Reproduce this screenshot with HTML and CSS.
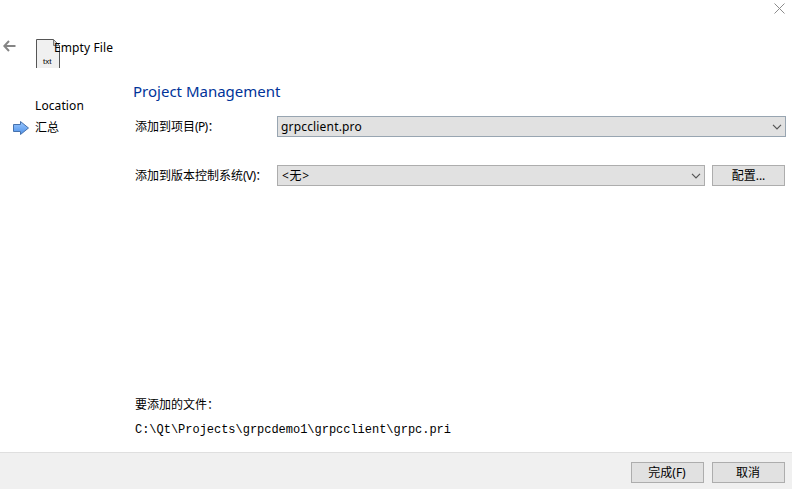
FILE: index.html
```html
<!DOCTYPE html>
<html lang="zh-CN">
<head>
<meta charset="utf-8">
<title>Empty File</title>
<link rel="stylesheet" href="styles.css">
</head>
<body>
<div class="wizard">
  <header class="titlebar">
    <svg class="close" width="11" height="11" viewBox="0 0 11 11"><path d="M.5 .5l10 10M10.500 .5l-10 10"/></svg>
  </header>
  <div class="heading">
    <svg class="back" width="13" height="12" viewBox="0 0 13 12"><path d="M6 1L1.300 6L6 11M1.500 6H12.500"/></svg>
    <div class="file-icon">
      <svg width="26" height="29" viewBox="0 0 26 29"><path class="sheet" d="M1.500 29V.5H18.500L24.500 6.500V29"/><path class="fold" d="M18.500 .5V6.500H24.500Z"/></svg>
      <span class="ext">txt</span>
    </div>
    <span class="name">Empty File</span>
  </div>
  <div class="content">
    <nav class="steps">
      <div class="step"><span class="latin">Location</span></div>
      <div class="step current">
        <svg width="17" height="16" viewBox="0 0 17 16">
          <defs><linearGradient id="blue" x1="0" y1="0" x2="0" y2="1"><stop offset="0" stop-color="#9bc8ff"/><stop offset="1" stop-color="#4e91e8"/></linearGradient></defs>
          <path d="M.5 4.500H7.500V1.500L15.500 8L7.500 14.500V11.500H.5Z" fill="url(#blue)" stroke="#4772ad"/>
        </svg>
        <span>汇总</span>
      </div>
    </nav>
    <main class="page">
      <h1>Project Management</h1>
      <div class="row">
        <label>添加到项目<span class="key">(P)：</span></label>
        <div class="combo focus"><span class="value">grpcclient.pro</span><svg width="10" height="6" viewBox="0 0 10 6"><path d="M1 .8l4 4l4-4"/></svg></div>
      </div>
      <div class="row vcs">
        <label>添加到版本控制系统<span class="key">(V)：</span></label>
        <div class="combo"><span class="none">&lt;无&gt;</span><svg width="10" height="6" viewBox="0 0 10 6"><path d="M1 .8l4 4l4-4"/></svg></div>
        <button>配置...</button>
      </div>
      <section class="files">
        <div class="files-title">要添加的文件<span class="key">：</span></div>
        <div class="path">C:\Qt\Projects\grpcdemo1\grpcclient\grpc.pri</div>
      </section>
    </main>
  </div>
  <footer>
    <button class="finish">完成(F)</button>
    <button>取消</button>
  </footer>
</div>
</body>
</html>
```
FILE: styles.css
```css
* { box-sizing: border-box; }
body { margin: 0; background: #fff; color: #000; font: 12px/18px "Noto Sans", "Noto Sans CJK SC", sans-serif; }
svg { display: block; flex: none; }
span, label, h1, .path { white-space: nowrap; }
.wizard { display: flex; flex-direction: column; width: 792px; height: 489px; overflow: hidden; }
.titlebar { display: flex; justify-content: flex-end; height: 38px; padding: 3px 7px 0 0; }
.close { fill: none; stroke: #8c8c8c; stroke-width: 1; }
.heading { display: flex; height: 43px; padding-left: 3px; }
.back { margin-top: 2px; fill: none; stroke: #858585; stroke-width: 2; }
.file-icon { position: relative; width: 26px; height: 30px; margin-left: 19px; }
.file-icon svg { margin-top: 1px; }
.sheet { fill: #f0f0f0; stroke: #555; }
.fold { fill: #ccc; stroke: #777; }
.ext { position: absolute; left: 8px; top: 19px; font: 8px/10px "Liberation Sans", sans-serif; }
.name { margin-left: -7px; padding-top: 1px; position: relative; z-index: 1; letter-spacing: .1px; }
.content { display: flex; flex: 1; min-height: 0; }
.steps { width: 133px; padding-top: 16px; }
.step { height: 22px; padding-left: 35px; line-height: 18px; }
.latin { letter-spacing: .1px; }
.current { display: flex; gap: 5px; padding-left: 13px; }
.current svg { margin-top: 1px; }
.page { display: flex; flex-direction: column; width: 653px; }
h1 { margin: 0; height: 35px; color: #003399; font: 15px/20px "Noto Sans", sans-serif; }
.row { display: flex; align-items: center; height: 21px; }
.vcs { margin-top: 28px; padding-right: 1px; }
label { width: 144px; padding-left: 2px; }
.key { letter-spacing: -.7px; }
.combo { display: flex; flex: 1; align-items: center; justify-content: space-between; height: 21px; padding: 0 3px; border: 1px solid #adadad; background: #e1e1e1; }
.combo path { fill: none; stroke: #555; stroke-width: 1.2; }
.value { letter-spacing: .17px; }
.none { padding-left: 1px; letter-spacing: .7px; }
.focus { border-color: #98a5b1; }
button { width: 73px; height: 21px; padding: 0; border: 1px solid #adadad; border-radius: 0; background: #e1e1e1; color: #000; font: inherit; line-height: 18px; }
.vcs button { margin-left: 7px; }
.files { margin-top: 210px; padding-left: 2px; }
.path { margin-top: 7px; font: 12px/18px "Liberation Mono", monospace; letter-spacing: -.02px; }
footer { display: flex; justify-content: flex-end; gap: 8px; height: 37px; padding: 9px 7px 0 0; border-top: 1px solid #dfdfdf; background: #f0f0f0; }
footer button { padding-right: 1px; }
```
